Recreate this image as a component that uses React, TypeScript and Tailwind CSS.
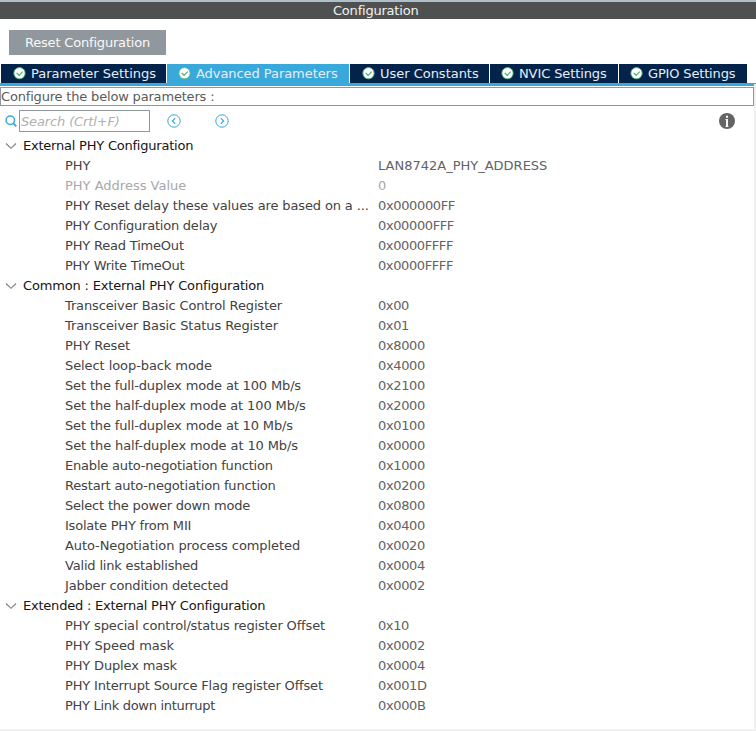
import React from "react";

type Row = { label: string; value: string; track: string; valueTrack: string; disabled?: boolean };
type Group = { title: string; track: string; rows: Row[] };

const groups: Group[] = [
  {
    title: "External PHY Configuration",
    track: "tracking-[-0.22px]",
    rows: [
      { label: "PHY", value: "LAN8742A_PHY_ADDRESS", track: "tracking-normal", valueTrack: "tracking-normal" },
      { label: "PHY Address Value", value: "0", track: "tracking-normal", valueTrack: "tracking-normal", disabled: true },
      { label: "PHY Reset delay these values are based on a ...", value: "0x000000FF", track: "tracking-[-0.13px]", valueTrack: "tracking-[-0.36px]" },
      { label: "PHY Configuration delay", value: "0x00000FFF", track: "tracking-[-0.23px]", valueTrack: "tracking-[-0.38px]" },
      { label: "PHY Read TimeOut", value: "0x0000FFFF", track: "tracking-[-0.19px]", valueTrack: "tracking-[-0.4px]" },
      { label: "PHY Write TimeOut", value: "0x0000FFFF", track: "tracking-[-0.25px]", valueTrack: "tracking-[-0.4px]" },
    ],
  },
  {
    title: "Common : External PHY Configuration",
    track: "tracking-[-0.17px]",
    rows: [
      { label: "Transceiver Basic Control Register", value: "0x00", track: "tracking-[-0.13px]", valueTrack: "tracking-[-0.4px]" },
      { label: "Transceiver Basic Status Register", value: "0x01", track: "tracking-[-0.09px]", valueTrack: "tracking-[-0.4px]" },
      { label: "PHY Reset", value: "0x8000", track: "tracking-[-0.1px]", valueTrack: "tracking-[-0.35px]" },
      { label: "Select loop-back mode", value: "0x4000", track: "tracking-[-0.08px]", valueTrack: "tracking-[-0.35px]" },
      { label: "Set the full-duplex mode at 100 Mb/s", value: "0x2100", track: "tracking-[-0.15px]", valueTrack: "tracking-[-0.35px]" },
      { label: "Set the half-duplex mode at 100 Mb/s", value: "0x2000", track: "tracking-[-0.12px]", valueTrack: "tracking-[-0.35px]" },
      { label: "Set the full-duplex mode at 10 Mb/s", value: "0x0100", track: "tracking-[-0.15px]", valueTrack: "tracking-[-0.35px]" },
      { label: "Set the half-duplex mode at 10 Mb/s", value: "0x0000", track: "tracking-[-0.11px]", valueTrack: "tracking-[-0.35px]" },
      { label: "Enable auto-negotiation function", value: "0x1000", track: "tracking-[-0.19px]", valueTrack: "tracking-[-0.35px]" },
      { label: "Restart auto-negotiation function", value: "0x0200", track: "tracking-[-0.17px]", valueTrack: "tracking-[-0.35px]" },
      { label: "Select the power down mode", value: "0x0800", track: "tracking-[-0.19px]", valueTrack: "tracking-[-0.35px]" },
      { label: "Isolate PHY from MII", value: "0x0400", track: "tracking-[-0.21px]", valueTrack: "tracking-[-0.35px]" },
      { label: "Auto-Negotiation process completed", value: "0x0020", track: "tracking-[-0.08px]", valueTrack: "tracking-[-0.35px]" },
      { label: "Valid link established", value: "0x0004", track: "tracking-[-0.18px]", valueTrack: "tracking-[-0.35px]" },
      { label: "Jabber condition detected", value: "0x0002", track: "tracking-[-0.18px]", valueTrack: "tracking-[-0.35px]" },
    ],
  },
  {
    title: "Extended : External PHY Configuration",
    track: "tracking-[-0.22px]",
    rows: [
      { label: "PHY special control/status register Offset", value: "0x10", track: "tracking-[-0.15px]", valueTrack: "tracking-[-0.4px]" },
      { label: "PHY Speed mask", value: "0x0002", track: "tracking-[-0.04px]", valueTrack: "tracking-[-0.35px]" },
      { label: "PHY Duplex mask", value: "0x0004", track: "tracking-[-0.16px]", valueTrack: "tracking-[-0.35px]" },
      { label: "PHY Interrupt Source Flag register Offset", value: "0x001D", track: "tracking-[-0.17px]", valueTrack: "tracking-[-0.35px]" },
      { label: "PHY Link down inturrupt", value: "0x000B", track: "tracking-[-0.3px]", valueTrack: "tracking-[-0.35px]" },
    ],
  },
];

const tabs = [
  { label: "Parameter Settings", width: "w-[165px] pl-3", track: "tracking-normal", active: false },
  { label: "Advanced Parameters", width: "w-[182px] pl-[11px]", track: "tracking-[-0.06px]", active: true },
  { label: "User Constants", width: "w-[139px] pl-3", track: "tracking-[-0.02px]", active: false },
  { label: "NVIC Settings", width: "w-[128px] pl-[11px]", track: "tracking-[-0.1px]", active: false },
  { label: "GPIO Settings", width: "w-[128px] pl-[11px]", track: "tracking-[-0.16px]", active: false },
];

function CheckBadge() {
  return (
    <svg width="13" height="13" viewBox="0 0 13 13" className="mt-[3px] shrink-0">
      <circle cx="6.5" cy="6.2" r="5.6" fill="#fff" stroke="#5dba82" strokeWidth="0.9" />
      <path d="M3.6 5.9 6.1 8.3 9.7 4.7" fill="none" stroke="#4bae74" strokeWidth="1.2" />
    </svg>
  );
}

function CircleArrow({ direction }: { direction: "left" | "right" }) {
  return (
    <svg width="14" height="14" viewBox="0 0 14 14" fill="none" stroke="#39a9dc">
      <circle cx="7" cy="7" r="6.2" strokeWidth="1" />
      <path d={direction === "left" ? "M8.2 4.2 5.4 7 8.2 9.8" : "M5.8 4.2 8.6 7 5.8 9.8"} strokeWidth="1.2" />
    </svg>
  );
}

function Chevron() {
  return (
    <svg width="12" height="8" viewBox="0 0 12 8" fill="none" className="mr-[6px] ml-[5px]">
      <path d="M1 1.5 6 6.3 11 1.5" stroke="#808080" strokeWidth="1.15" />
    </svg>
  );
}

export default function App() {
  return (
    <div className="flex h-[731px] w-[756px] flex-col overflow-hidden bg-white font-['DejaVu_Sans',sans-serif] text-[13px] leading-5 whitespace-pre">
      <div className="h-[2px] shrink-0 bg-[#b0c0cb]" />
      <header className="h-[17px] shrink-0 bg-[#4f5150] pl-[333px] leading-[17px] tracking-[-0.21px] text-[#f2f2f2]">Configuration</header>
      <div className="h-[45px] shrink-0 pt-[11px] pl-[9px]">
        <button className="block h-[25px] w-[157px] bg-[#90989e] text-center leading-[25px] tracking-[-0.18px] text-[#f8f8f8]">Reset Configuration</button>
      </div>
      <nav className="flex h-[19px] shrink-0 gap-px pl-px">
        {tabs.map((t) => (
          <div
            key={t.label}
            className={`flex shrink-0 gap-[5px] leading-[19px] text-[#e6eef5] ${t.width} ${t.track} ${t.active ? "bg-[#39a9dc]" : "bg-[#03234b]"}`}
          >
            <CheckBadge />
            <span>{t.label}</span>
          </div>
        ))}
      </nav>
      <div className="h-px shrink-0 bg-[#39a9dc]" />
      <main className="flex h-[647px] w-full flex-col border-r-2 border-b-2 border-[#f1f1f1]">
        <div className="h-[2px] shrink-0 bg-[#39a9dc]" />
        <div className="mt-px h-[19px] shrink-0 border border-[#90989e] leading-[17px] tracking-[-0.18px] text-[#5a5a5a]">Configure the below parameters :</div>
        <div className="flex h-[30px] shrink-0 items-center pl-[5px]">
          <svg width="12" height="12" viewBox="0 0 12 12" fill="none" stroke="#39a9dc" className="mr-[2px]">
            <circle cx="5.3" cy="5.3" r="4.2" strokeWidth="1.5" />
            <path d="m8.3 8.3 3 3" strokeWidth="1.8" />
          </svg>
          <div className="h-[22px] w-[131px] border border-[#90989e] pl-px leading-[21px] tracking-[-0.13px] text-[#b0b0b0] italic">Search (Crtl+F)</div>
          <div className="ml-[17px] flex w-[62px] justify-between">
            <CircleArrow direction="left" />
            <CircleArrow direction="right" />
          </div>
          <svg width="16" height="16" viewBox="0 0 16 16" className="ml-[490px]">
            <circle cx="8" cy="8" r="8" fill="#646464" />
            <path d="M7 2.8h2v2H7z" fill="#fff" />
            <path d="M6.3 6H9v7.2h.6v.8H6.4v-.8H7V6.8h-.7z" fill="#f4f4f4" />
          </svg>
        </div>
        {groups.map((g) => (
          <section key={g.title}>
            <div className={`flex h-5 items-center text-[#151515] ${g.track}`}>
              <Chevron />
              {g.title}
            </div>
            {g.rows.map((r) => (
              <div key={r.label} className={`flex h-5 pl-[65px] ${r.disabled ? "text-[#a8a8a8]" : "text-[#424242]"}`}>
                <span className={`w-[313px] shrink-0 ${r.track}`}>{r.label}</span>
                <span className={`${r.valueTrack} ${r.disabled ? "text-[#a8a8a8]" : "text-[#626262]"}`}>{r.value}</span>
              </div>
            ))}
          </section>
        ))}
      </main>
    </div>
  );
}
